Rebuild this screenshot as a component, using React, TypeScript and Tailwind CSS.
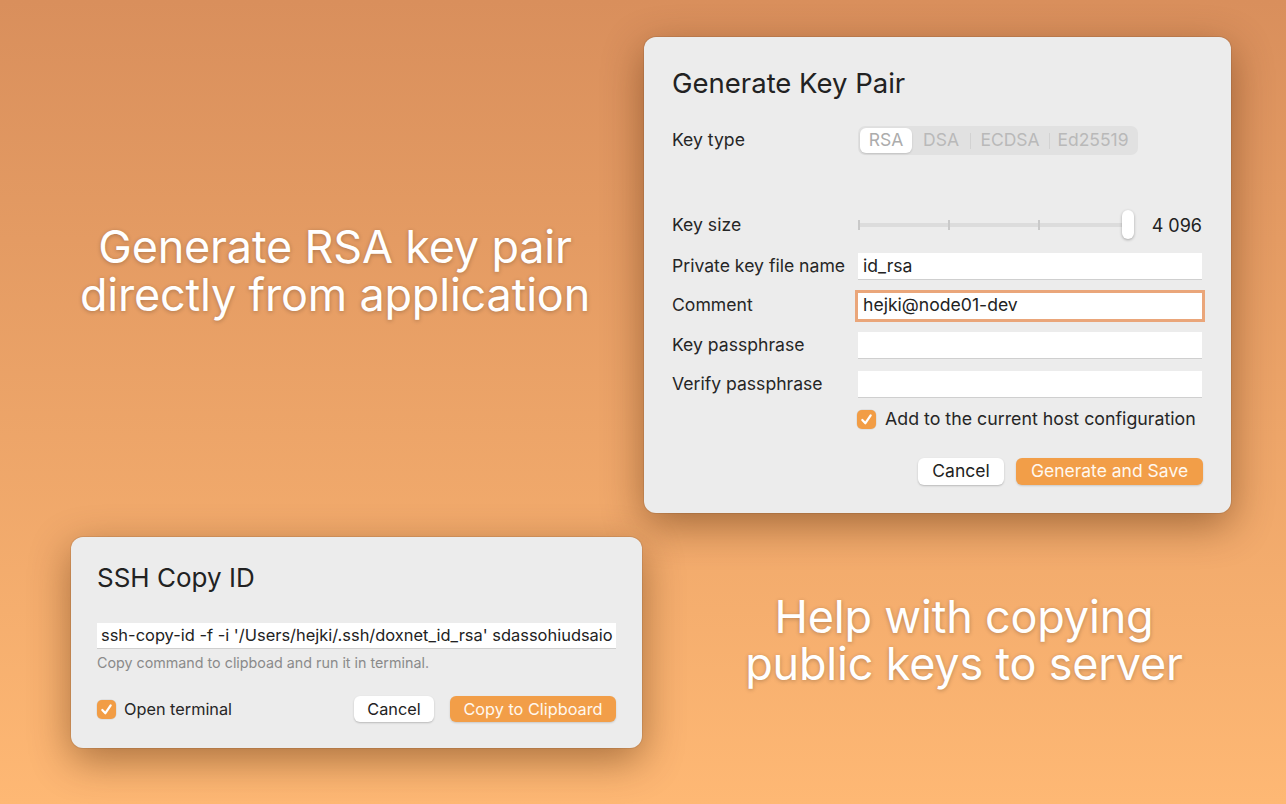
import React from "react";

function Check() {
  return (
    <span className="flex h-[19px] w-[19px] items-center justify-center rounded-[5px] bg-[#f29d45] shadow-[0_0_0_0.5px_rgba(0,0,0,0.1)]">
      <svg width="13" height="13" viewBox="0 0 14 14" fill="none">
        <path d="M2.5 7.5 L5.8 11 L11.5 2.5" stroke="white" strokeWidth="2.4" strokeLinecap="round" strokeLinejoin="round" />
      </svg>
    </span>
  );
}

function Field({ value, focused }: { value?: string; focused?: boolean }) {
  return (
    <div
      className={
        focused
          ? "flex h-[26px] items-center bg-white px-[5px] text-[17.6px] text-[#222] shadow-[0_0_0_3px_#eaa67a]"
          : "flex h-[26px] items-center bg-white px-[5px] text-[17.6px] text-[#222] shadow-[0_1px_0_rgba(0,0,0,0.12)]"
      }
    >
      {value}
    </div>
  );
}

function Row({ label, children }: { label: string; children: React.ReactNode }) {
  return (
    <div className="grid grid-cols-[186px_344px] items-center">
      <div className="text-[17.6px] text-[#262626]">{label}</div>
      {children}
    </div>
  );
}

export default function App() {
  const shadowText = "[text-shadow:0_1px_4px_rgba(0,0,0,0.25)]";
  return (
    <div
      className="flex h-[804px] w-[1286px] flex-col bg-gradient-to-b from-[#d98f5c] to-[#feb874] pt-[37px]"
      style={{ fontFamily: "Inter, 'Noto Sans', sans-serif" }}
    >
      {/* Row 1 */}
      <div className="flex h-[476px]">
        <div className="flex w-[644px] items-center justify-center pb-[8px] pl-[26px]">
          <div className={"text-center text-[45px] leading-[48px] tracking-[-0.2px] text-white " + shadowText}>
            <div>Generate RSA key pair</div>
            <div>directly from application</div>
          </div>
        </div>
        <div className="flex h-[476px] w-[587px] flex-col rounded-[12px] bg-[#ececec] px-[28px] pt-[29px] shadow-[0_12px_40px_rgba(70,30,0,0.45),0_0_0_1px_rgba(0,0,0,0.08)]">
          <div className="text-[27.5px] leading-[34px] text-[#222]">Generate Key Pair</div>
          <div className="mt-[26px]">
            <Row label="Key type">
              <div className="flex h-[29px] w-[280px] items-center rounded-[7px] bg-[#e1e1e1] p-[2px] text-[17.5px]">
                <div className="flex h-full w-[52px] items-center justify-center rounded-[6px] bg-white text-[#acacac] shadow-[0_1px_2px_rgba(0,0,0,0.15)]">
                  RSA
                </div>
                <div className="flex h-full w-[58px] items-center justify-center text-[#b9b9b9]">DSA</div>
                <div className="h-[16px] w-px bg-[#d2d2d2]" />
                <div className="flex h-full w-[78px] items-center justify-center text-[#b9b9b9]">ECDSA</div>
                <div className="h-[16px] w-px bg-[#d2d2d2]" />
                <div className="flex h-full flex-1 items-center justify-center text-[#b9b9b9]">Ed25519</div>
              </div>
            </Row>
          </div>
          <div className="mt-[55px]">
            <Row label="Key size">
              <div className="flex h-[30px] items-center">
                <div className="relative h-[30px] w-[276px]">
                  <div className="absolute left-0 right-[4px] top-[13px] h-[4px] rounded-full bg-[#dcdcdc]" />
                  <div className="absolute left-0 right-[4px] top-[10px] flex justify-between">
                    <div className="h-[10px] w-[2px] bg-[#c9c9c9]" />
                    <div className="h-[10px] w-[2px] bg-[#c9c9c9]" />
                    <div className="h-[10px] w-[2px] bg-[#c9c9c9]" />
                    <div className="h-[10px] w-[2px] bg-[#c9c9c9]" />
                  </div>
                  <div className="absolute right-0 top-0 h-[29px] w-[12px] rounded-full bg-white shadow-[0_1px_3px_rgba(0,0,0,0.3)]" />
                </div>
                <div className="ml-auto text-[18px] text-[#222]">4 096</div>
              </div>
            </Row>
          </div>
          <div className="mt-[13px] flex flex-col gap-[13px]">
            <Row label="Private key file name">
              <Field value="id_rsa" />
            </Row>
            <Row label="Comment">
              <Field value="hejki@node01-dev" focused />
            </Row>
            <Row label="Key passphrase">
              <Field />
            </Row>
            <Row label="Verify passphrase">
              <Field />
            </Row>
          </div>
          <div className="mt-[12px] flex h-[20px] items-center gap-[9px] pl-[185px]">
            <Check />
            <span className="text-[17.8px] text-[#262626]">Add to the current host configuration</span>
          </div>
          <div className="mt-[28px] flex justify-end gap-[12px]">
            <button className="h-[27px] w-[86px] rounded-[6px] bg-white text-[17.5px] text-[#222] shadow-[0_1px_2px_rgba(0,0,0,0.22)]">
              Cancel
            </button>
            <button className="h-[27px] w-[187px] rounded-[6px] bg-[#f29e48] text-[17.5px] text-[#fff8ef] shadow-[0_1px_2px_rgba(0,0,0,0.15)]">
              Generate and Save
            </button>
          </div>
        </div>
      </div>

      {/* Row 2 */}
      <div className="mt-[24px] flex">
        <div className="ml-[71px] flex h-[211px] w-[571px] flex-col rounded-[12px] bg-[#ececec] px-[26px] pt-[25px] shadow-[0_12px_40px_rgba(70,30,0,0.45),0_0_0_1px_rgba(0,0,0,0.08)]">
          <div className="text-[26px] leading-[32px] text-[#222]">SSH Copy ID</div>
          <div className="mt-[29px] flex h-[25px] items-center overflow-hidden whitespace-nowrap bg-white px-[4px] text-[16.45px] text-[#222] shadow-[0_1px_0_rgba(0,0,0,0.12)]">
            ssh-copy-id -f -i '/Users/hejki/.ssh/doxnet_id_rsa' sdassohiudsaio
          </div>
          <div className="mt-[5px] text-[14.3px] leading-[20px] text-[#8a8a8a]">
            Copy command to clipboad and run it in terminal.
          </div>
          <div className="mt-[23px] flex items-center">
            <Check />
            <span className="ml-[8px] text-[16.3px] text-[#262626]">Open terminal</span>
            <div className="ml-auto flex gap-[16px]">
              <button className="h-[26px] w-[80px] rounded-[6px] bg-white text-[16.3px] text-[#222] shadow-[0_1px_2px_rgba(0,0,0,0.22)]">
                Cancel
              </button>
              <button className="h-[26px] w-[166px] rounded-[6px] bg-[#f29e48] text-[16.3px] text-[#fff8ef] shadow-[0_1px_2px_rgba(0,0,0,0.15)]">
                Copy to Clipboard
              </button>
            </div>
          </div>
        </div>
        <div className="flex flex-1 items-center justify-center pb-[6px]">
          <div className={"text-center text-[45px] leading-[47px] tracking-[-0.2px] text-white " + shadowText}>
            <div>Help with copying</div>
            <div>public keys to server</div>
          </div>
        </div>
      </div>
    </div>
  );
}
